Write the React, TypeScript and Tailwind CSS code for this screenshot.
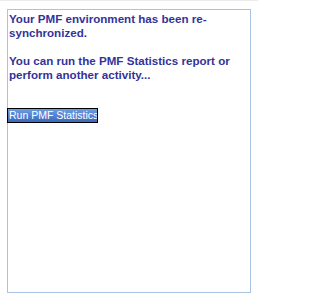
import React from "react";

export default function App() {
  return (
    <div className="w-[258px] h-[301px] bg-white relative" style={{ fontFamily: '"Liberation Sans", Arial, sans-serif' }}>
      <div className="h-px w-full bg-[#ececec]" />
      <div className="pl-[7px] pt-[8px]">
        <div className="w-[244px] h-[284px] border border-[#a9c4e2] pt-[2px] pl-px">
          <p className="text-[11.6px] leading-[14px] font-bold text-[#333399] pr-4">
            Your PMF environment has been re-synchronized.
          </p>
          <p className="text-[11.6px] leading-[14px] font-bold text-[#333399] mt-[14px] pr-4">
            You can run the PMF Statistics report or perform another activity...
          </p>
          <button className="mt-[26px] -ml-[2px] w-[91px] h-[15px] border border-black bg-gradient-to-b from-[#6d9de2] to-[#3a69bd] text-white text-[10.5px] leading-[13px] text-left pl-px overflow-hidden whitespace-nowrap block">
            Run PMF Statistics
          </button>
        </div>
      </div>
    </div>
  );
}
